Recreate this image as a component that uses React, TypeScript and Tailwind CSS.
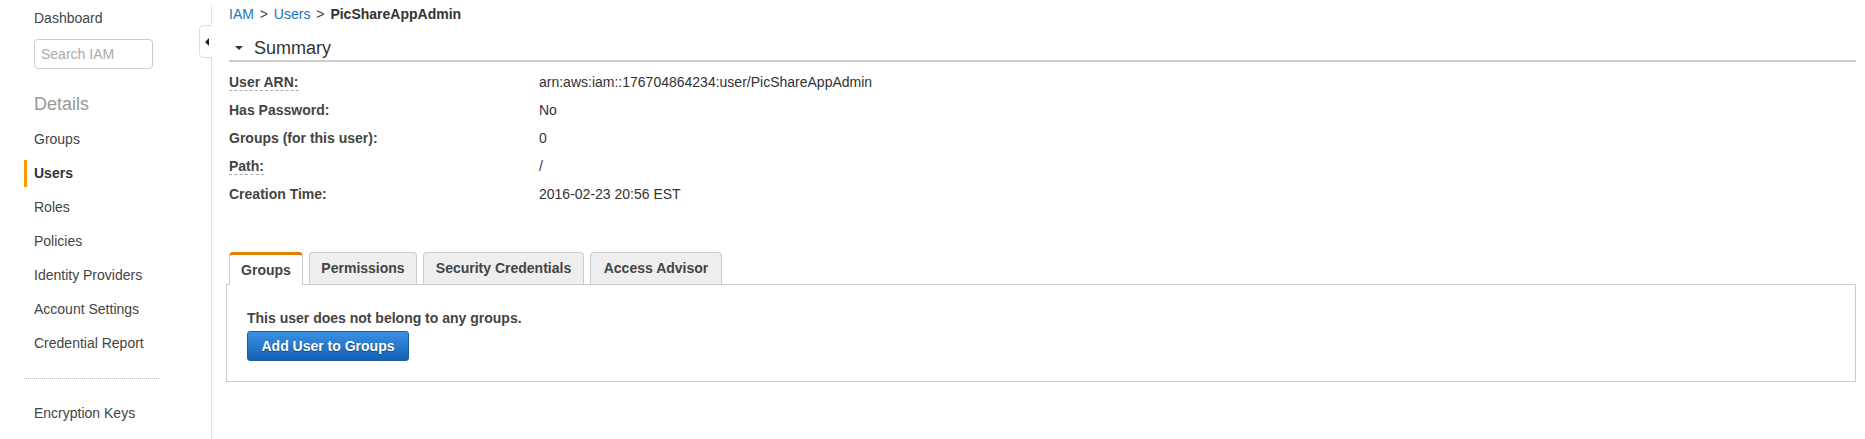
import React from "react";

// IAM user detail page – sidebar + summary + tabs

const NAV = [
  { label: "Groups" },
  { label: "Users", active: true },
  { label: "Roles" },
  { label: "Policies" },
  { label: "Identity Providers" },
  { label: "Account Settings" },
  { label: "Credential Report" },
];

const SUMMARY = [
  { label: "User ARN:", value: "arn:aws:iam::176704864234:user/PicShareAppAdmin", hint: true },
  { label: "Has Password:", value: "No" },
  { label: "Groups (for this user):", value: "0" },
  { label: "Path:", value: "/", hint: true },
  { label: "Creation Time:", value: "2016-02-23 20:56 EST" },
];

const TABS = [
  { label: "Groups", w: "w-[74px]", active: true },
  { label: "Permissions", w: "w-[108px]" },
  { label: "Security Credentials", w: "w-[161px]" },
  { label: "Access Advisor", w: "w-[132px]" },
];

function NavItem({ label, active }: { label: string; active?: boolean }) {
  return (
    <div className="h-[34px] flex items-center pl-[24px]">
      <span
        className={
          "h-[27px] leading-[27px] pl-[7px] border-l-[3px] " +
          (active ? "border-[#ff9900] font-bold text-[#333]" : "border-transparent text-[#444]")
        }
      >
        {label}
      </span>
    </div>
  );
}

function Sidebar() {
  return (
    <div className="w-[211px] shrink-0 text-[14px]">
      <div className="mt-[8px] h-[20px] leading-[20px] pl-[34px] text-[#444]">Dashboard</div>
      <div className="mt-[11px] ml-[34px] w-[119px] h-[30px] rounded-[4px] border border-[#ccc] flex items-center pl-[6px] text-[#aaa]">
        Search IAM
      </div>
      <div className="mt-[23px] pl-[34px] h-[24px] leading-[24px] text-[18px] text-[#999]">Details</div>
      <div className="mt-[6px]">
        {NAV.map((n) => (
          <NavItem key={n.label} label={n.label} active={n.active} />
        ))}
      </div>
      <div className="mt-[18px] ml-[24px] w-[135px] border-t border-dotted border-[#bbb]" />
      <div className="mt-[17px]">
        <NavItem label="Encryption Keys" />
      </div>
    </div>
  );
}

function Divider() {
  return (
    <div className="relative w-px shrink-0 mt-[5px] bg-[#e1e1e1]">
      <div className="absolute top-[20px] -left-[12px] w-[13px] h-[33px] bg-white border border-r-0 border-[#ddd] rounded-l-[5px] flex items-center justify-center">
        <div className="w-0 h-0 border-y-[4px] border-y-transparent border-r-[4px] border-r-[#222] ml-[1px]" />
      </div>
    </div>
  );
}

function Summary() {
  return (
    <div className="ml-[3px]">
      <div className="mt-[12px] h-[24px] flex items-center border-b-2 border-[#ccc] box-content">
        <div className="ml-[6px] w-0 h-0 border-x-[4px] border-x-transparent border-t-[4px] border-t-[#333]" />
        <span className="ml-[11px] text-[18px] leading-[24px] text-[#333]">Summary</span>
      </div>
      <div className="mt-[6px]">
        {SUMMARY.map((r) => (
          <div key={r.label} className="h-[28px] flex items-center">
            <div className="w-[310px] shrink-0 font-bold text-[#444]">
              <span className={r.hint ? "inline-block leading-[16px] border-b border-dashed border-[#aaa]" : ""}>
                {r.label}
              </span>
            </div>
            <div className="text-[#333]">{r.value}</div>
          </div>
        ))}
      </div>
    </div>
  );
}

function Tabs() {
  return (
    <div className="mt-[44px]">
      <div className="flex gap-[6px] ml-[3px] relative z-10">
        {TABS.map((t) => (
          <div
            key={t.label}
            className={
              t.w +
              " flex items-center justify-center font-bold text-[#444] rounded-t-[4px] border-x border-[#ccc] " +
              (t.active
                ? "bg-white border-t-[3px] border-t-[#e67e00] h-[33px] -mb-px"
                : "bg-[#eee] border-t h-[32px] self-start")
            }
          >
            {t.label}
          </div>
        ))}
      </div>
      <div className="border border-[#ccc] pt-[23px] pb-[20px] pl-[20px]">
        <div className="font-bold text-[#444] leading-[20px]">This user does not belong to any groups.</div>
        <button className="mt-[3px] w-[162px] h-[30px] rounded-[3px] border border-[#1a5ea8] bg-gradient-to-b from-[#3a90e2] to-[#1462b4] text-white font-bold text-[14px] [text-shadow:0_1px_1px_rgba(0,0,0,0.4)]">
          Add User to Groups
        </button>
      </div>
    </div>
  );
}

export default function App() {
  return (
    <div className="w-full h-screen flex bg-white font-['Liberation_Sans',Arial,sans-serif] text-[14px] overflow-hidden">
      <Sidebar />
      <Divider />
      <div className="flex-1 pl-[14px] pr-[9px]">
        <div className="ml-[3px] pt-[4px] h-[24px] leading-[20px]">
          <a className="text-[#1e73be]">IAM</a>
          <span className="text-[#444] px-[2px]"> &gt; </span>
          <a className="text-[#1e73be]">Users</a>
          <span className="text-[#444] px-[2px]"> &gt; </span>
          <span className="font-bold text-[#333]">PicShareAppAdmin</span>
        </div>
        <Summary />
        <Tabs />
      </div>
    </div>
  );
}
